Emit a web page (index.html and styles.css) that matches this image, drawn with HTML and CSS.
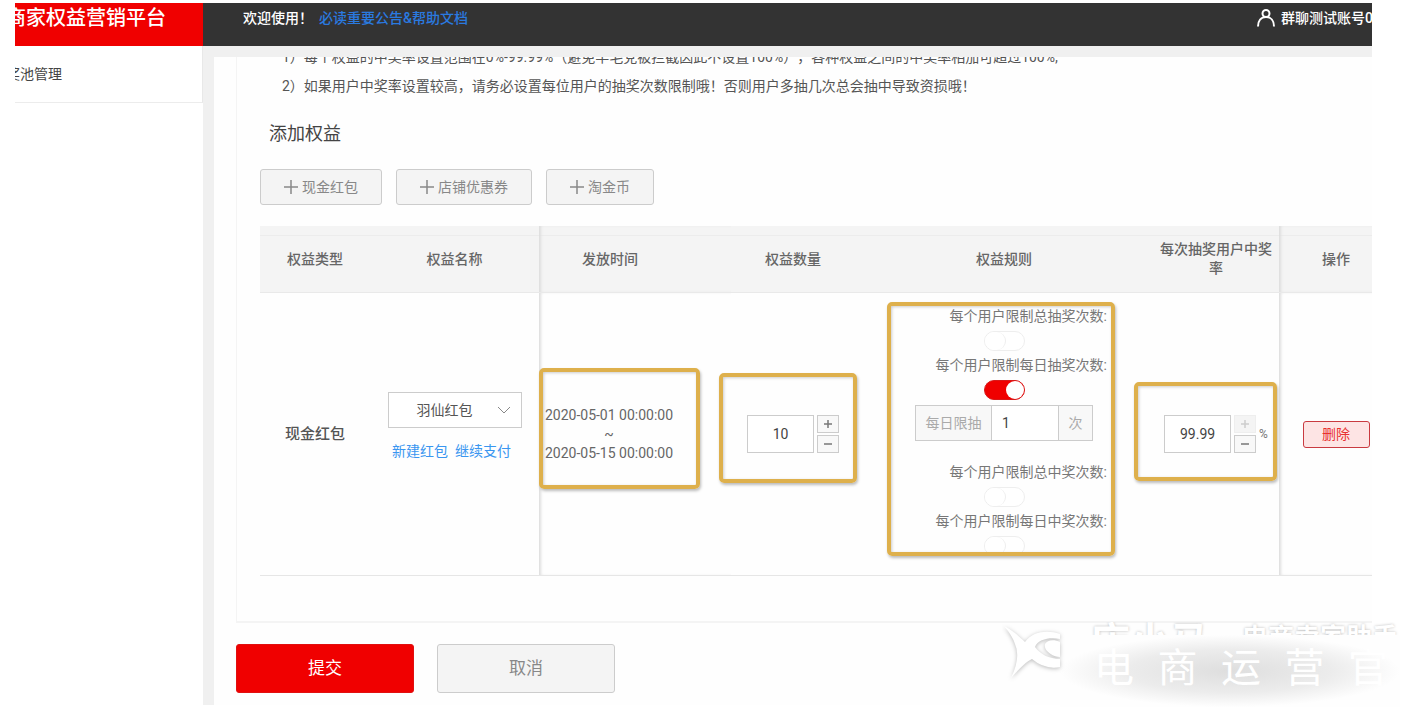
FILE: index.html
```
<!DOCTYPE html>
<html lang="zh-CN">
<head>
<meta charset="utf-8">
<title>商家权益营销平台</title>
<link rel="stylesheet" href="styles.css">
</head>
<body>
<div class="app">
  <aside class="sidebar">
    <div class="brand"><span class="brand-name">商家权益营销平台</span></div>
    <nav class="menu"><a class="menu-item" href="#">奖池管理</a></nav>
  </aside>
  <div class="main">
    <header class="topbar">
      <div class="welcome">欢迎使用！<a class="notice" href="#">必读重要公告&amp;帮助文档</a></div>
      <div class="account">
        <svg class="user-icon" viewBox="0 0 20 20" aria-hidden="true"><circle cx="10" cy="5.500" r="3.500"/><path d="M2 18.500C2 13 5 9 10 9s8 4 8 9.500"/></svg>
        <span class="account-name">群聊测试账号01</span>
      </div>
    </header>
    <main class="content">
      <section class="card">
        <div class="notes">
          <p>1）每个权益的中奖率设置范围在0%-99.99%（避免羊毛党被拦截因此不设置100%），各种权益之间的中奖率相加可超过100%;</p>
          <p>2）如果用户中奖率设置较高，请务必设置每位用户的抽奖次数限制哦！否则用户多抽几次总会抽中导致资损哦！</p>
        </div>
        <h2 class="heading">添加权益</h2>
        <div class="add-bar">
          <button class="btn" type="button"><svg class="plus" viewBox="0 0 14 14" aria-hidden="true"><path d="M7 0v14M0 7h14"/></svg>现金红包</button>
          <button class="btn" type="button"><svg class="plus" viewBox="0 0 14 14" aria-hidden="true"><path d="M7 0v14M0 7h14"/></svg>店铺优惠券</button>
          <button class="btn" type="button"><svg class="plus" viewBox="0 0 14 14" aria-hidden="true"><path d="M7 0v14M0 7h14"/></svg>淘金币</button>
        </div>
        <div class="table-wrap">
          <table class="table">
            <colgroup><col class="c-type"><col class="c-name"><col class="c-time"><col class="c-count"><col class="c-rule"><col class="c-rate"><col class="c-op"></colgroup>
            <thead>
              <tr><th>权益类型</th><th>权益名称</th><th class="edge time">发放时间</th><th>权益数量</th><th>权益规则</th><th>每次抽奖用户中奖率</th><th class="edge">操作</th></tr>
            </thead>
            <tbody>
              <tr>
                <td class="type">现金红包</td>
                <td class="name">
                  <div class="picker">
                    <select class="select" aria-label="权益名称"><option>羽仙红包</option></select>
                    <svg class="chevron" viewBox="0 0 14 8" aria-hidden="true"><path d="M1 1l6 6 6-6"/></svg>
                  </div>
                  <div class="links"><a href="#">新建红包</a><a href="#">继续支付</a></div>
                </td>
                <td class="edge time">2020-05-01 00:00:00<br>~<br>2020-05-15 00:00:00<span class="mark mark-time"></span></td>
                <td>
                  <div class="stepper">
                    <input class="number" type="text" value="10" aria-label="权益数量">
                    <div class="steps"><button class="step" type="button" aria-label="增加"><svg viewBox="0 0 10 10"><path d="M5 1v8M1 5h8"/></svg></button><button class="step" type="button" aria-label="减少"><svg viewBox="0 0 10 10"><path d="M1 5h8"/></svg></button></div>
                  </div>
                  <span class="mark mark-count"></span>
                </td>
                <td class="rule-cell">
                  <div class="rules">
                    <label class="rule" for="r1">每个用户限制总抽奖次数:</label>
                    <input class="switch" id="r1" type="checkbox">
                    <label class="rule" for="r2">每个用户限制每日抽奖次数:</label>
                    <input class="switch" id="r2" type="checkbox" checked>
                    <div class="group"><label class="addon" for="daily">每日限抽</label><input class="group-input" id="daily" type="text" value="1"><span class="addon">次</span></div>
                    <label class="rule" for="r3">每个用户限制总中奖次数:</label>
                    <input class="switch" id="r3" type="checkbox">
                    <label class="rule" for="r4">每个用户限制每日中奖次数:</label>
                    <input class="switch" id="r4" type="checkbox">
                  </div>
                  <span class="mark mark-rule"></span>
                </td>
                <td>
                  <div class="stepper">
                    <input class="number" type="text" value="99.99" aria-label="中奖率">
                    <div class="steps"><button class="step" type="button" aria-label="增加" disabled><svg viewBox="0 0 10 10"><path d="M5 1v8M1 5h8"/></svg></button><button class="step" type="button" aria-label="减少"><svg viewBox="0 0 10 10"><path d="M1 5h8"/></svg></button></div>
                    <span class="unit">%</span>
                  </div>
                  <span class="mark mark-rate"></span>
                </td>
                <td class="edge"><button class="delete" type="button">删除</button></td>
              </tr>
            </tbody>
          </table>
        </div>
      </section>
      <div class="actions">
        <button class="action primary" type="button">提交</button>
        <button class="action" type="button">取消</button>
      </div>
    </main>
  </div>
</div>
<div class="watermark">
  <svg class="wm-logo" viewBox="0 0 58 62" aria-hidden="true"><path fill-rule="evenodd" d="M2 4Q12 9 23 20C31 9 46 8 58 12V45Q43 48 30 37Q23 40 9 56Q19 35 13 22Q10 13 2 4ZM33 25C38 32 47 37 58 37V35C52 35 41 29 43 22C45 18 52 17 58 20V17C48 15 36 17 33 25Z"/></svg>
  <div class="wm-text">
    <div class="wm-top"><span class="wm-brand">店小马</span><span class="wm-sub">电商卖家助手</span></div>
    <div class="wm-name"><span>电</span><span>商</span><span>运</span><span>营</span><span>官</span></div>
  </div>
</div>
</body>
</html>
```
FILE: styles.css
```
* { box-sizing: border-box; }
body {
  margin: 0;
  padding: 3px 38px 2px 15px;
  position: relative;
  overflow: hidden;
  background: #fff;
  color: #555;
  font: 14px/20px Roboto, "Noto Sans CJK SC", sans-serif;
}
a { text-decoration: none; }
button, input, select { font: inherit; color: inherit; margin: 0; }
button { cursor: pointer; }
svg { fill: none; stroke: currentColor; }

.app { display: flex; min-height: calc(100vh - 5px); overflow: hidden; }
.sidebar { flex: 0 0 188px; overflow: hidden; }
.brand { height: 43px; background: #f00000; color: #fff; font-size: 20px; line-height: 31px; font-weight: 500; white-space: nowrap; }
.brand-name { margin-left: -9px; }
.menu { border-right: 1px solid #e8e8e8; border-bottom: 1px solid #ececec; }
.menu-item { display: block; margin-left: -9px; height: 56px; line-height: 56px; color: #444; }

.main { flex: 1; min-width: 0; display: flex; flex-direction: column; }
.topbar { height: 43px; padding-left: 40px; display: flex; justify-content: space-between; background: #333; color: #fff; font-weight: 500; line-height: 31px; white-space: nowrap; overflow: hidden; }
.notice { margin-left: 6px; color: #2a7ae0; }
.account { display: flex; width: 116px; gap: 5px; }
.user-icon { flex: none; width: 20px; height: 20px; margin-top: 5px; stroke-width: 2; }

.content { flex: 1; border: solid #f0f0f0; border-width: 11px 0 0 11px; padding-left: 22px; background: #fefefe; overflow: hidden; }
.card { padding: 0 0 45px 23px; border: solid #f4f4f4; border-width: 0 0 2px 1px; }
.notes { margin-top: -14px; padding-left: 22px; line-height: 29px; white-space: nowrap; text-spacing-trim: space-all; }
.notes p { margin: 0; }
.heading { margin: 19px 0 21px 9px; font-size: 18px; line-height: 28px; font-weight: 400; color: #444; }
.add-bar { display: flex; gap: 14px; }
.btn { display: flex; align-items: center; gap: 4px; height: 36px; padding: 0 23px; border: 1px solid #ccc; border-radius: 3px; background: #f4f4f4; color: #888; }
.plus { width: 14px; height: 14px; stroke-width: 1.5; }

.table-wrap { margin-top: 21px; overflow: hidden; }
.table { width: 100%; min-width: 1133px; table-layout: fixed; border-collapse: separate; border-spacing: 0; text-align: center; }
.c-type { width: 110px; }
.c-name { width: 169px; }
.c-time { width: 192px; }
.c-count { width: 124px; }
.c-rule { width: 298px; }
.c-rate { width: 126px; }
.c-op { width: 114px; }
.table th { height: 67px; padding: 0 2px; font-weight: 500; line-height: 19px; color: #666; background: linear-gradient(#f4f4f4 9px, #ececec 9px, #ececec 10px, #f4f4f4 10px); border-bottom: 1px solid #e9e9e9; }
.table td { position: relative; height: 283px; padding: 0; border-bottom: 1px solid #e6e6e6; }
.table .edge { box-shadow: inset 3px 0 3px -1px #ddd; }
.table .time { padding-right: 52px; line-height: 19px; color: #666; }
.table .type { font-size: 15px; font-weight: 500; }
.table .name { padding-bottom: 14px; }
.picker { position: relative; width: 134px; margin: 0 auto 12px; }
.select { display: block; width: 100%; height: 36px; padding: 0 20px 0 0; border: 1px solid #ccc; border-radius: 0; appearance: none; background: #fff; text-align: center; text-align-last: center; }
.chevron { position: absolute; right: 11px; top: 14px; width: 14px; height: 8px; color: #888; pointer-events: none; }
.links { display: flex; justify-content: center; gap: 7px; padding-right: 6px; line-height: 22px; }
.links a { color: #3a96f0; }

.mark { position: absolute; border: 4px solid #deb04c; border-radius: 5px; box-shadow: 1px 2px 3px #bbb, inset 1px 1px 3px #ccc; pointer-events: none; }
.mark-time { left: 0; top: 75px; width: 161px; height: 121px; }
.mark-count { left: -12px; top: 80px; width: 138px; height: 110px; }
.mark-rule { left: 32px; top: 9px; width: 228px; height: 254px; }
.mark-rate { left: -19px; top: 89px; width: 143px; height: 99px; z-index: 1; }

.stepper { display: flex; justify-content: center; align-items: center; gap: 3px; }
.number { width: 67px; height: 38px; padding: 0; border: 1px solid #ccc; text-align: center; color: #444; background: #fff; }
.steps { display: flex; flex-direction: column; gap: 2px; }
.step { display: flex; align-items: center; justify-content: center; width: 22px; height: 18px; padding: 0; border: 1px solid #ccc; background: #f8f8f8; color: #777; }
.step svg { width: 10px; height: 10px; stroke-width: 1.5; }
.step:disabled { border-color: #eee; background: #f4f4f4; color: #ccc; }
.unit { font-size: 12px; color: #777; }

.table .rule-cell { vertical-align: top; padding-top: 11px; }
.rules { display: flex; flex-direction: column; align-items: center; width: 206px; height: 249px; margin: 0 auto; overflow: hidden; color: #777; }
.rule { flex: none; align-self: flex-end; line-height: 24px; }
.switch { flex: none; appearance: none; width: 41px; height: 20px; margin: 3px 0 2px; padding: 0; border: 1px solid #eee; border-radius: 10px; background: #fff; display: flex; }
.switch::before { content: ""; width: 20px; height: 18px; border-right: 1px solid #eee; border-radius: 9px; background: #fff; }
.switch:checked { background: #f00000; border-color: #d81818; justify-content: flex-end; }
.switch:checked::before { width: 18px; border: 0; }
.group { flex: none; display: flex; width: 178px; height: 36px; margin: 3px 0 19px; border: 1px solid #ccc; background: #f8f8f8; color: #aaa; line-height: 34px; }
.addon { flex: 1 1 auto; text-align: center; }
.group-input { width: 68px; padding: 0 10px; border: solid #ccc; border-width: 0 1px; background: #fff; color: #444; }
.delete { display: block; width: 67px; height: 27px; margin: 0 auto; padding: 0; border: 1px solid #c93a40; border-radius: 3px; background: #fde4e4; color: #e83030; }

.actions { display: flex; gap: 23px; padding-top: 21px; }
.action { width: 178px; height: 49px; padding: 0 0 2px; border: 1px solid #ccc; border-radius: 3px; background: #f4f4f4; color: #888; font-size: 17px; }
.action.primary { background: #f00000; border-color: #e01010; color: #fff; }

.watermark { position: absolute; right: 10px; bottom: 0; display: flex; width: 398px; height: 85px; color: #fff; overflow: hidden; pointer-events: none; }
.wm-logo { flex: none; width: 58px; height: 62px; fill: #fff; stroke: none; filter: drop-shadow(0 1px 2px #bbb); }
.wm-text { flex: 1; }
.wm-top { display: flex; justify-content: space-between; height: 13px; padding-left: 30px; overflow: hidden; text-shadow: 0 0 3px #bbb; white-space: nowrap; }
.wm-brand { font-size: 40px; line-height: 42px; font-weight: 700; }
.wm-sub { padding-right: 2px; font-size: 26px; line-height: 32px; font-weight: 700; }
.wm-name { display: flex; justify-content: space-between; padding: 0 12px 0 34px; height: 72px; font-size: 40px; line-height: 68px; background: radial-gradient(closest-side, #dedede, #ececec 60%, #fefefe); }
```
